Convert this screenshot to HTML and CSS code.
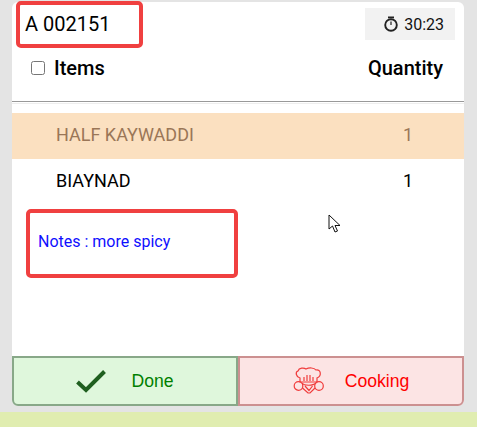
FILE: index.html
```html
<!DOCTYPE html>
<html lang="en">
<head>
  <meta charset="UTF-8">
  <meta name="viewport" content="width=device-width, initial-scale=1.0">
  <title>Kitchen Order</title>
  <link rel="stylesheet" href="styles.css">
</head>
<body>
  <div class="order-card">
    <div class="order-top">
      <span class="order-no">A 002151</span>
      <div class="timer">
        <svg class="timer-icon" width="16" height="16" viewBox="0 0 16 16">
          <rect x="5" y="0.5" width="6" height="1.8" fill="#222"/>
          <circle cx="8" cy="9" r="5.8" fill="none" stroke="#222" stroke-width="1.9"/>
          <rect x="7.4" y="5.5" width="1.2" height="3.5" fill="#222"/>
        </svg>
        <span>30:23</span>
      </div>
    </div>
    <div class="items-head">
      <label class="items-label"><input type="checkbox" class="check-all"> Items</label>
      <span class="qty-label">Quantity</span>
    </div>
    <div class="head-rule"></div>
    <div class="item-row done-row">
      <span>HALF KAYWADDI</span>
      <span class="qty">1</span>
    </div>
    <div class="item-row">
      <span>BIAYNAD</span>
      <span class="qty">1</span>
    </div>
    <div class="notes">Notes : more spicy</div>
    <div class="actions">
      <button class="action-btn btn-done">
        <svg class="btn-icon" width="30" height="24" viewBox="0 0 30 24">
          <path d="M1.5 13 L10 21 L28.5 2.5" fill="none" stroke="#1f5f1f" stroke-width="4"/>
        </svg>
        <span>Done</span>
      </button>
      <button class="action-btn btn-cooking">
        <svg class="btn-icon" width="32" height="28" viewBox="0 0 32 28" fill="none" stroke="#f03c3c" stroke-width="1.2">
          <path d="M7 11 C3 10 2 5 5 4 C6 0.5 11 0.5 13 2 C16 0.5 21 0.5 23 3 C28 2 29 9 24 11 L24 15 L7 15 Z"/>
          <path d="M11 14 V10 M14 14 V8 M17 14 V8 M20 14 V10"/>
          <circle cx="5.5" cy="19" r="4.3"/>
          <circle cx="26" cy="19" r="4.3"/>
          <path d="M9 16 C11 19 20 19 23 16 M9.5 21 L15 26 L17 26 L22 21 M12 19 L16 23.5 L19.5 19"/>
        </svg>
        <span>Cooking</span>
      </button>
    </div>
    <div class="mark mark-order"></div>
    <div class="mark mark-notes"></div>
    <svg class="mouse-cursor" width="14" height="20" viewBox="0 0 14 20">
      <path d="M1 1 V15 L4.5 12 L7 18 L9.5 17 L7 11.5 L12 11.5 Z" fill="#fff" stroke="#111" stroke-width="1"/>
    </svg>
  </div>
  <div class="page-foot"></div>
</body>
</html>
```

FILE: styles.css
```css
* {
  box-sizing: border-box;
  font-family: 'Roboto', sans-serif;
}
html, body {
  height: 100%;
}
body {
  margin: 0;
  background: #e4e4e4;
  overflow: hidden;
  padding-top: 2px;
}
.order-card {
  position: relative;
  margin-left: 12px;
  width: 452px;
  height: 404px;
  background: #fff;
  border-radius: 6px;
  display: flex;
  flex-direction: column;
}
.order-top {
  height: 44px;
  display: flex;
  justify-content: space-between;
  align-items: center;
  padding: 0 9px 0 13px;
}
.order-no {
  font-size: 20px;
  color: #000;
}
.timer {
  width: 90px;
  height: 32px;
  background: #f2f2f2;
  display: flex;
  align-items: center;
  justify-content: flex-end;
  gap: 5px;
  padding-right: 11px;
  font-size: 16px;
  color: #111;
}
.items-head {
  height: 44px;
  display: flex;
  justify-content: space-between;
  align-items: center;
  padding: 0 21px 0 19px;
  font-size: 20px;
  font-weight: 500;
  color: #000;
}
.items-label {
  display: flex;
  align-items: center;
  gap: 9px;
}
.check-all {
  margin: 0;
  width: 14px;
  height: 14px;
}
.head-rule {
  margin-top: 11px;
  height: 3px;
  border-top: 1px solid #999;
  border-bottom: 1px solid #eee;
}
.item-row {
  height: 46px;
  display: flex;
  align-items: center;
  padding-left: 44px;
  padding-right: 26px;
  padding-bottom: 4px;
  font-size: 18px;
  color: #000;
}
.head-rule + .item-row {
  margin-top: 9px;
}
.done-row {
  background: #fbe0c0;
  color: #9a7657;
}
.qty {
  margin-left: auto;
  width: 60px;
  text-align: center;
}
.notes {
  margin-top: 24px;
  padding-left: 26px;
  font-size: 16px;
  line-height: 26px;
  color: #0f0fff;
}
.actions {
  margin-top: auto;
  height: 50px;
  display: flex;
}
.action-btn {
  width: 50%;
  display: flex;
  align-items: center;
  justify-content: center;
  gap: 25px;
  margin: 0;
  padding: 0;
  font-family: 'Liberation Sans', sans-serif;
  font-size: 17.6px;
  border: 2px solid;
  cursor: pointer;
}
.action-btn span {
  font-family: 'Liberation Sans', sans-serif;
}
.btn-done {
  background: #dff7dc;
  border-color: #88a888;
  color: #008000;
  border-bottom-left-radius: 6px;
}
.btn-cooking {
  background: #fce4e4;
  border-color: #cc9090;
  color: #ff0000;
  border-bottom-right-radius: 6px;
  gap: 20px;
}
.mark {
  position: absolute;
  border: 4px solid #f04040;
  border-radius: 5px;
}
.mark-order {
  left: 4px;
  top: -1px;
  width: 127px;
  height: 47px;
}
.mark-notes {
  left: 14px;
  top: 207px;
  width: 212px;
  height: 69px;
}
.mouse-cursor {
  position: absolute;
  left: 316px;
  top: 212px;
}
.page-foot {
  margin-top: 6px;
  height: 20px;
  background: #e0edb0;
}
```
